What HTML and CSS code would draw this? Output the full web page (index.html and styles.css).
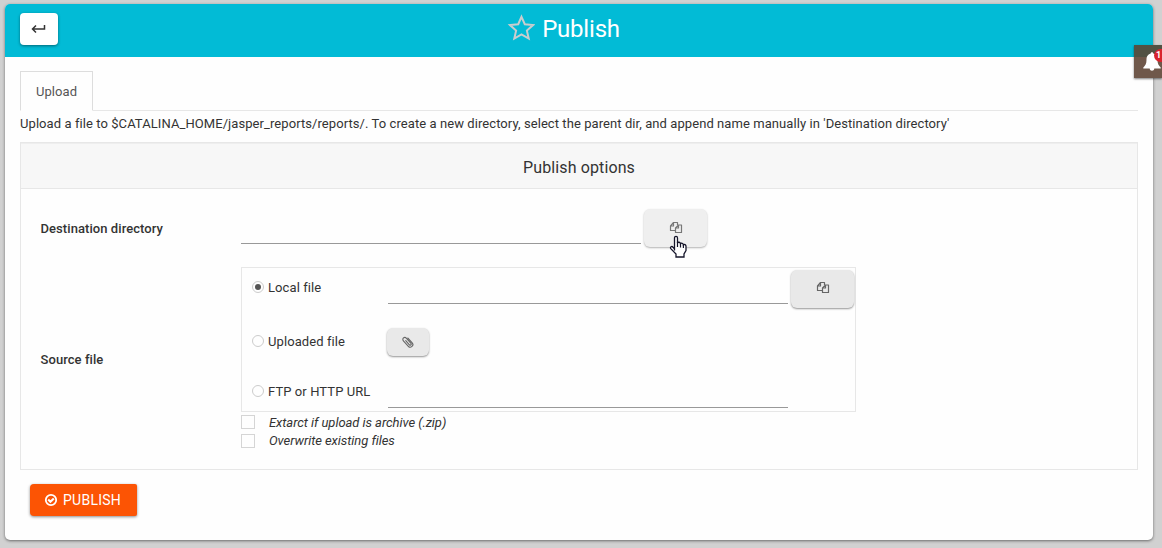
FILE: index.html
```html
<!DOCTYPE html>
<html lang="en">
<head>
<meta charset="utf-8">
<title>Publish</title>
<link rel="stylesheet" href="styles.css">
</head>
<body>
<svg class="defs" width="0" height="0">
  <symbol id="copy" viewBox="0 0 14 14">
    <path d="M7 9.5H1.5V5L4.5 1.5H8.5V4M4.5 1.5V5H1.5M6.5 11.5V7L9.5 4H12.5V11.5ZM9.5 4V7H6.5" fill="none" stroke="currentColor" stroke-width="1.2" stroke-linejoin="round"/>
  </symbol>
</svg>
<main class="card">
  <header class="topbar">
    <button class="back" aria-label="Back"><svg width="16" height="12" viewBox="0 0 16 12"><path d="M13.5 2V6H2M5 2.5L1.5 6L5 9.5" fill="none" stroke="#333" stroke-width="1.5"/></svg></button>
    <h1 class="title"><svg width="28" height="28" viewBox="0 0 28 28"><path d="M14.5 2.8L17.8 10.2L26 11.1L19.9 16.6L21.7 24.6L14.5 20.5L7.3 24.6L9.1 16.6L3 11.1L11.2 10.2Z" fill="none" stroke="#c9cdce" stroke-width="2"/></svg><span>Publish</span></h1>
  </header>
  <div class="content">
    <nav class="tabs"><a class="tab">Upload</a></nav>
    <p class="intro">Upload a file to $CATALINA_HOME/jasper_reports/reports/. To create a new directory, select the parent dir, and append name manually in 'Destination directory'</p>
    <section class="panel">
      <h2 class="panel-title">Publish options</h2>
      <div class="row destination">
        <label class="label">Destination directory</label>
        <input class="line-input">
        <button class="btn browse hovered" aria-label="Browse"><svg width="14" height="14"><use href="#copy"/></svg>
          <svg class="cursor" width="19" height="24" viewBox="0 0 19 24"><path d="M5.5 15.5V3C5.5 .8 8.5 .8 8.5 3V8C9 6.8 11.3 7 11.5 8.7C12.3 7.8 14.2 8.2 14.4 9.8C15.5 9 17 9.8 17 11.3V15.5L15 19V22H7V19L1.8 13.6C.8 12 2.7 10.8 4 12.2L5.5 14" fill="#fff" stroke="#15152a" stroke-width="1.3"/><path d="M8.5 7V12M11.5 8.5V12.5M14.4 9.7V13" stroke="#15152a" stroke-width="1.2"/></svg>
        </button>
      </div>
      <div class="row source">
        <label class="label">Source file</label>
        <div>
          <div class="sources">
            <div class="option local"><span class="radio checked"></span><span class="option-name">Local file</span><input class="line-input"><button class="btn browse" aria-label="Browse"><svg width="14" height="14"><use href="#copy"/></svg></button></div>
            <div class="option uploaded"><span class="radio"></span><span class="option-name">Uploaded file</span><button class="btn attach" aria-label="Attach"><svg width="14" height="14" viewBox="0 0 14 14"><g transform="rotate(-42 7 7)"><path d="M9.6 4V10.4C9.6 13.8 4.4 13.8 4.4 10.4V3C4.4 .3 8.3 .3 8.3 3V10C8.3 11.4 6.2 11.4 6.2 10V4.5" fill="none" stroke="#666" stroke-width="1.1" stroke-linecap="round"/></g></svg></button></div>
            <div class="option remote"><span class="radio"></span><span class="option-name">FTP or HTTP URL</span><input class="line-input"></div>
          </div>
          <div class="check"><span class="box"></span><span>Extarct if upload is archive (.zip)</span></div>
          <div class="check"><span class="box"></span><span>Overwrite existing files</span></div>
        </div>
      </div>
    </section>
    <button class="publish"><svg width="14" height="14" viewBox="0 0 14 14"><circle cx="7" cy="7" r="5.2" fill="none" stroke="#fff" stroke-width="1.8"/><path d="M4.2 6.6L6.4 8.8L9.8 5.4" fill="none" stroke="#fff" stroke-width="2.1"/></svg><span>PUBLISH</span></button>
  </div>
</main>
<aside class="notice"><svg width="20" height="22" viewBox="0 0 20 22"><path d="M8.7 2.5C8.7 .8 11.3 .8 11.3 2.5C14.5 3.4 15.5 6 15.5 9C15.5 13 16.8 14.5 18.7 16.5V17.5H1.3V16.5C3.2 14.5 4.5 13 4.5 9C4.5 6 5.5 3.4 8.7 2.5ZM7.7 17.5H12.3C12.2 20.5 7.8 20.5 7.7 17.5Z" fill="#fff"/></svg><span class="badge">1</span></aside>
</body>
</html>
```
FILE: styles.css
```css
* { box-sizing: border-box; }
body {
  margin: 0;
  height: 548px;
  padding: 4px 9px 0 5px;
  overflow: hidden;
  background: #d1d1d1;
  color: #333;
  font: 13px/18px Roboto, sans-serif;
}
button { border: 0; padding: 0; font-family: inherit; }
svg { display: block; }
.defs { position: absolute; }
.card {
  height: 536px;
  background: #fefefe;
  border-radius: 5px;
  box-shadow: 0 1px 3px rgba(0, 0, 0, .5);
}
.topbar {
  display: grid;
  grid-template-columns: 38px 1fr 38px;
  align-items: start;
  height: 53px;
  padding: 9px 15px 0;
  border-radius: 5px 5px 0 0;
  background: #02bbd6;
}
.back {
  display: flex;
  align-items: center;
  justify-content: center;
  height: 32px;
  border-radius: 4px;
  background: #fff;
  box-shadow: 0 1px 3px rgba(0, 0, 0, .45);
}
.title {
  display: flex;
  justify-content: center;
  gap: 7px;
  margin: 1px 0 0;
  padding-right: 31px;
  color: #fff;
  font-size: 24px;
  line-height: 30px;
  font-weight: 400;
  letter-spacing: -.2px;
}
.content { padding: 14px 15px 0; }
.tabs { display: flex; height: 40px; border-bottom: 1px solid #e7e7e7; }
.tab {
  width: 73px;
  height: 40px;
  border: 1px solid #ddd;
  border-bottom-color: #fefefe;
  color: #555;
  line-height: 39px;
  letter-spacing: .08px;
  text-align: center;
}
.intro { margin: 4px 0 0; height: 27px; letter-spacing: .074px; white-space: nowrap; }
.panel { height: 328px; border: 1px solid #e7e7e7; }
.panel-title {
  margin: 0;
  height: 46px;
  border-top: 1px solid #eee;
  border-bottom: 1px solid #e7e7e7;
  background: #f7f7f7;
  font-size: 16px;
  line-height: 47px;
  font-weight: 400;
  letter-spacing: .12px;
  text-align: center;
}
.row { display: grid; padding-left: 20px; }
.label { margin-left: -.5px; font-weight: 500; letter-spacing: .07px; }
.source .label { margin-top: 2px; }
.line-input {
  width: 400px;
  height: 24px;
  padding: 0;
  border: 0;
  border-bottom: 1px solid #999;
  background: transparent;
}
.destination {
  grid-template-columns: 200px 400px 66px;
  align-items: center;
  height: 39px;
  margin-top: 20px;
}
.destination .line-input { margin-top: 7px; }
.destination .btn { margin-left: 3px; margin-bottom: 1px; }
.btn {
  display: flex;
  align-items: center;
  justify-content: center;
  border-radius: 6px;
  background: #e9e9e9;
  color: #666;
  box-shadow: 0 1px 2px rgba(0, 0, 0, .42);
}
.browse { width: 63px; height: 38px; padding-bottom: 1px; }
.hovered { position: relative; background: #efefef; color: #777; box-shadow: 0 1px 2px rgba(0, 0, 0, .3); }
.cursor { position: absolute; left: 25px; top: 26px; }
.attach { width: 42px; height: 28px; }
.source { grid-template-columns: 200px 615px; align-items: center; margin-top: 19px; }
.sources { height: 145px; border: 1px solid #e7e7e7; }
.option { display: flex; align-items: center; padding-left: 10px; }
.option-name { width: 120px; margin: 2px 0 0 4px; letter-spacing: .09px; }
.radio {
  display: grid;
  place-items: center;
  width: 12px;
  height: 12px;
  border: 1px solid #ccc;
  border-radius: 50%;
}
.checked::after { content: ""; width: 6px; height: 6px; border-radius: 50%; background: #555; }
.local { height: 38px; }
.local .line-input { margin: 9px 3px 0 0; }
.local .btn { flex: none; margin-top: 3px; }
.uploaded { height: 30px; margin-top: 20px; }
.uploaded .btn { margin: 2px 0 0 -1px; }
.remote { height: 34px; margin-top: 18px; }
.remote .line-input { margin-top: 9px; }
.check { display: flex; align-items: center; gap: 14px; height: 18px; font-style: italic; letter-spacing: -.06px; }
.sources + .check { margin-top: 2px; }
.box { width: 14px; height: 14px; border: 1px solid #d5d5d5; }
.sources + .check .box { margin-bottom: 2px; }
.publish {
  display: flex;
  align-items: center;
  gap: 5px;
  width: 107px;
  height: 32px;
  margin: 14px 0 0 10px;
  padding-left: 14px;
  border-radius: 4px 2px 2px 4px;
  background: #fc5404;
  color: #fff;
  font-size: 14px;
  letter-spacing: .25px;
  box-shadow: 0 1px 3px rgba(0, 0, 0, .45);
}
.notice {
  position: absolute;
  right: 0;
  top: 45px;
  width: 28px;
  height: 33px;
  padding: 6px 0 0 8px;
  overflow: hidden;
  background: linear-gradient(#525244 12px, #6f584a 12px);
  box-shadow: 0 1px 2px rgba(0, 0, 0, .5);
}
.badge {
  position: absolute;
  right: 0;
  top: 4px;
  width: 8px;
  height: 13px;
  padding-left: 2px;
  border-radius: 7px 0 0 7px;
  background: #d9232d;
  color: #fff;
  font-size: 9px;
  line-height: 13px;
  font-weight: 700;
}
```
